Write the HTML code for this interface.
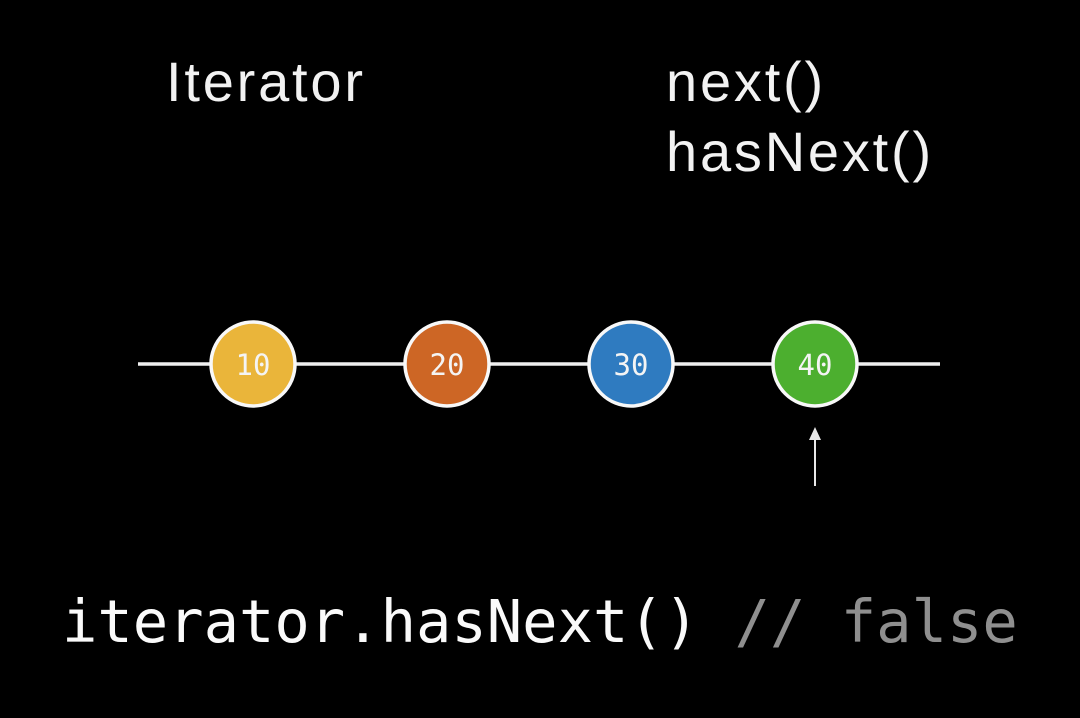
<!DOCTYPE html>
<html><head><style>
html,body{margin:0;padding:0;background:#000;width:1080px;height:718px;overflow:hidden}
.t{position:absolute;color:#f2f2f2;font-family:"Liberation Sans",sans-serif;font-size:56px;letter-spacing:2.8px;line-height:1;white-space:nowrap}
.code{position:absolute;left:62px;top:593px;font-family:"DejaVu Sans Mono","Liberation Mono",monospace;font-size:58.8px;line-height:1;color:#fafafa;white-space:nowrap}
.code span{color:#8f8f8f}
</style></head><body>
<div class="t" style="left:166px;top:54px">Iterator</div>
<div class="t" style="left:666px;top:54px">next()</div>
<div class="t" style="left:666px;top:124px">hasNext()</div>
<svg width="1080" height="718" style="position:absolute;left:0;top:0">
<line x1="138" y1="364" x2="940" y2="364" stroke="#f0f0f0" stroke-width="3.5"/>
<g stroke="#f8f8f8" stroke-width="3.5">
<circle cx="253" cy="364" r="42" fill="#eab53a"/>
<circle cx="447" cy="364" r="42" fill="#cd6625"/>
<circle cx="631" cy="364" r="42" fill="#2f7bc0"/>
<circle cx="815" cy="364" r="42" fill="#4caf2f"/>
</g>
<g font-family="DejaVu Sans Mono, monospace" font-size="29" fill="#f4f4f4" text-anchor="middle">
<text x="253" y="375">10</text><text x="447" y="375">20</text><text x="631" y="375">30</text><text x="815" y="375">40</text>
</g>
<line x1="815" y1="436" x2="815" y2="486" stroke="#e8e8e8" stroke-width="2"/>
<path d="M809 440 L815 427 L821 440 Z" fill="#e8e8e8"/>
</svg>
<div class="code">iterator.hasNext() <span>// false</span></div>
</body></html>
